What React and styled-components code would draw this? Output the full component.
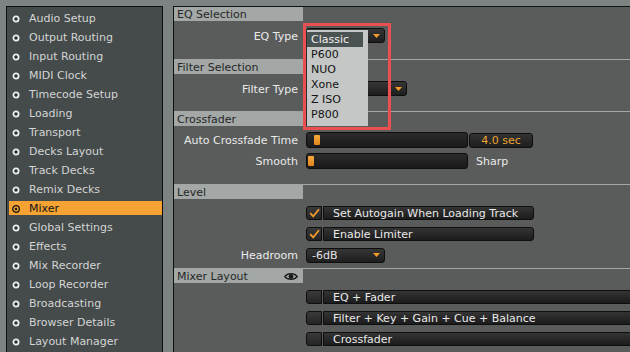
import React from 'react';
import styled, { createGlobalStyle } from 'styled-components';

const GlobalStyle = createGlobalStyle`
  html, body {
    margin: 0;
    padding: 0;
    background: #7d8383;
    overflow: hidden;
  }
  body {
    font-family: "DejaVu Sans", "Liberation Sans", sans-serif;
    font-size: 11px;
  }
`;

const Frame = styled.div`
  position: relative;
  display: flex;
  height: 352px;
  width: 630px;
  padding: 6px 0 0 6px;
  box-sizing: border-box;
  overflow: hidden;
`;

const Sidebar = styled.div`
  width: 157px;
  flex-shrink: 0;
  box-sizing: border-box;
  background: #454a4a;
  border: 1px solid #0f1111;
  border-bottom: none;
  padding: 4px 0 0 2px;
  display: flex;
  flex-direction: column;
  gap: 5px;
`;

const NavItem = styled.div`
  height: 14px;
  box-sizing: border-box;
  display: flex;
  align-items: center;
  gap: 9px;
  padding: 2px 0 0 3px;
  background: ${p => (p.active ? '#f6a333' : 'transparent')};
  color: ${p => (p.active ? '#141414' : '#d3d5d5')};
  line-height: 12px;
  white-space: nowrap;
`;

const Main = styled.div`
  flex: 1;
  margin-left: 10px;
  background: #5a5c5b;
  border-top: 1px solid #0f1111;
  border-left: 1px solid #0f1111;
  display: flex;
  flex-direction: column;
`;

const Section = styled.div`
  border-top: ${p => (p.first ? 'none' : '1px solid #a2a5a4')};
  display: flex;
  flex-direction: column;
  flex: ${p => (p.grow ? 1 : 'none')};
`;

const HeaderLabel = styled.div`
  width: 129px;
  height: 14px;
  box-sizing: border-box;
  background: #a3a7a6;
  color: #252727;
  padding: 1px 5px 0 3px;
  display: flex;
  align-items: center;
  justify-content: space-between;
  line-height: 13px;
`;

const Body = styled.div`
  height: ${p => (p.h ? `${p.h}px` : 'auto')};
  box-sizing: border-box;
  padding-top: ${p => p.pad}px;
  display: flex;
  flex-direction: column;
  gap: ${p => p.gap || 0}px;
`;

const Row = styled.div`
  display: flex;
  align-items: center;
  height: ${p => p.h || 14}px;
`;

const Label = styled.div`
  width: 124px;
  flex-shrink: 0;
  margin-right: 8px;
  text-align: right;
  color: #e9eaea;
  white-space: nowrap;
  padding-top: 1px;
`;

const Spacer = styled.div`
  width: 132px;
  flex-shrink: 0;
`;

const Dropdown = styled.div`
  width: ${p => p.w}px;
  height: 15px;
  box-sizing: border-box;
  border: 1px solid #0e0e0e;
  border-radius: 3px;
  background: linear-gradient(#363636, #1e1e1e);
  color: #e2e2e2;
  padding: 0 4px 0 5px;
  display: flex;
  align-items: center;
  justify-content: space-between;
`;

const Slider = styled.div`
  position: relative;
  width: 162px;
  height: 16px;
  box-sizing: border-box;
  border: 1px solid #0e0e0e;
  border-radius: 3px;
  background: linear-gradient(#2b2b2b, #1a1a1a);
`;

const Thumb = styled.div`
  position: absolute;
  left: ${p => p.x}px;
  top: 2px;
  width: 6px;
  height: 10px;
  border-radius: 1px;
  background: linear-gradient(#f8aa3c, #e0851b);
`;

const ValueBox = styled.div`
  width: 64px;
  height: 15px;
  margin-left: 1px;
  box-sizing: border-box;
  border: 1px solid #0e0e0e;
  border-radius: 3px;
  background: linear-gradient(#333, #1d1d1d);
  color: #eda433;
  display: flex;
  align-items: center;
  justify-content: center;
`;

const SideText = styled.div`
  margin-left: 8px;
  color: #e9eaea;
`;

const CheckBox = styled.div`
  width: 16px;
  height: 14px;
  box-sizing: border-box;
  border: 1px solid #0e0e0e;
  border-radius: 3px 0 0 3px;
  background: linear-gradient(#3a3a3a, #242424);
  display: flex;
  align-items: center;
  justify-content: center;
  flex-shrink: 0;
`;

const ToggleButton = styled.div`
  width: ${p => (p.w ? `${p.w}px` : 'auto')};
  flex: ${p => (p.w ? 'none' : 1)};
  margin-left: 1px;
  margin-right: ${p => (p.w ? 0 : -6)}px;
  height: 14px;
  box-sizing: border-box;
  border: 1px solid #0e0e0e;
  border-radius: 0 3px 3px 0;
  background: linear-gradient(#343434, #1c1c1c);
  color: #e9eaea;
  padding-left: 9px;
  display: flex;
  align-items: center;
  white-space: nowrap;
`;

const Popup = styled.div`
  position: absolute;
  left: 306px;
  top: 30px;
  width: 62px;
  height: 96px;
  box-sizing: border-box;
  background: #c4c7c5;
  border-left: 1px solid #2e3030;
  padding-top: 2px;
  display: flex;
  flex-direction: column;
`;

const PopItem = styled.div`
  height: 15px;
  line-height: 15px;
  padding-left: 4px;
  margin-right: 5px;
  background: ${p => (p.active ? '#4b5252' : 'transparent')};
  color: ${p => (p.active ? '#eef0f0' : '#121212')};
`;

const Annotation = styled.div`
  position: absolute;
  left: 303px;
  top: 23px;
  width: 88px;
  height: 107px;
  box-sizing: border-box;
  border: 3px solid #ea5050;
  pointer-events: none;
`;

const Bullet = ({ active }) => (
  <svg width="8" height="8" viewBox="0 0 8 8">
    {active ? (
      <>
        <circle cx="4" cy="4" r="3.3" fill="none" stroke="#151515" strokeWidth="1.3" />
        <circle cx="4" cy="4" r="1.2" fill="#151515" />
      </>
    ) : (
      <circle cx="4" cy="4" r="2.6" fill="#2b2e2e" stroke="#eceeee" strokeWidth="1.8" />
    )}
  </svg>
);

const Arrow = () => (
  <svg width="7" height="4" viewBox="0 0 7 4">
    <polygon points="0,0 7,0 3.5,4" fill="#f59b2b" />
  </svg>
);

const Check = () => (
  <svg width="11" height="10" viewBox="0 0 11 10">
    <path d="M1.2 5.2 L4.2 8.4 L10 1.2" fill="none" stroke="#f39a2c" strokeWidth="1.8" />
  </svg>
);

const Eye = () => (
  <svg width="14" height="9" viewBox="0 0 14 9">
    <path d="M0.8 4.6 C3.5 0.6 10.5 0.6 13.2 4.6 C10.5 8.2 3.5 8.2 0.8 4.6 Z" fill="#a3a7a6" stroke="#1c1c1c" strokeWidth="1.4" />
    <circle cx="7" cy="4.4" r="2.4" fill="#1c1c1c" />
  </svg>
);

const navItems = [
  'Audio Setup', 'Output Routing', 'Input Routing', 'MIDI Clock', 'Timecode Setup',
  'Loading', 'Transport', 'Decks Layout', 'Track Decks', 'Remix Decks', 'Mixer',
  'Global Settings', 'Effects', 'Mix Recorder', 'Loop Recorder', 'Broadcasting',
  'Browser Details', 'Layout Manager',
];

const eqTypes = ['Classic', 'P600', 'NUO', 'Xone', 'Z ISO', 'P800'];

export default function App() {
  return (
    <>
      <GlobalStyle />
      <Frame>
        <Sidebar>
          {navItems.map(name => (
            <NavItem key={name} active={name === 'Mixer'}>
              <Bullet active={name === 'Mixer'} />
              {name}
            </NavItem>
          ))}
        </Sidebar>

        <Main>
          <Section first>
            <HeaderLabel>EQ Selection</HeaderLabel>
            <Body h={38} pad={7}>
              <Row h={15}>
                <Label>EQ Type</Label>
                <Dropdown w={79}><span /><Arrow /></Dropdown>
              </Row>
            </Body>
          </Section>

          <Section>
            <HeaderLabel>Filter Selection</HeaderLabel>
            <Body h={37} pad={7}>
              <Row h={15}>
                <Label>Filter Type</Label>
                <Dropdown w={101}><span /><Arrow /></Dropdown>
              </Row>
            </Body>
          </Section>

          <Section>
            <HeaderLabel>Crossfader</HeaderLabel>
            <Body h={58} pad={6} gap={5}>
              <Row h={16}>
                <Label>Auto Crossfade Time</Label>
                <Slider><Thumb x={7} /></Slider>
                <ValueBox>4.0 sec</ValueBox>
              </Row>
              <Row h={16}>
                <Label>Smooth</Label>
                <Slider><Thumb x={1} /></Slider>
                <SideText>Sharp</SideText>
              </Row>
            </Body>
          </Section>

          <Section>
            <HeaderLabel>Level</HeaderLabel>
            <Body h={69} pad={7} gap={7}>
              <Row>
                <Spacer />
                <CheckBox><Check /></CheckBox>
                <ToggleButton w={211}>Set Autogain When Loading Track</ToggleButton>
              </Row>
              <Row>
                <Spacer />
                <CheckBox><Check /></CheckBox>
                <ToggleButton w={211}>Enable Limiter</ToggleButton>
              </Row>
              <Row>
                <Label>Headroom</Label>
                <Dropdown w={79}><span>-6dB</span><Arrow /></Dropdown>
              </Row>
            </Body>
          </Section>

          <Section grow>
            <HeaderLabel>Mixer Layout<Eye /></HeaderLabel>
            <Body pad={7} gap={7}>
              {['EQ + Fader', 'Filter + Key + Gain + Cue + Balance', 'Crossfader'].map(t => (
                <Row key={t}>
                  <Spacer />
                  <CheckBox />
                  <ToggleButton>{t}</ToggleButton>
                </Row>
              ))}
            </Body>
          </Section>
        </Main>

        <Popup>
          {eqTypes.map(t => (
            <PopItem key={t} active={t === 'Classic'}>{t}</PopItem>
          ))}
        </Popup>
        <Annotation />
      </Frame>
    </>
  );
}
